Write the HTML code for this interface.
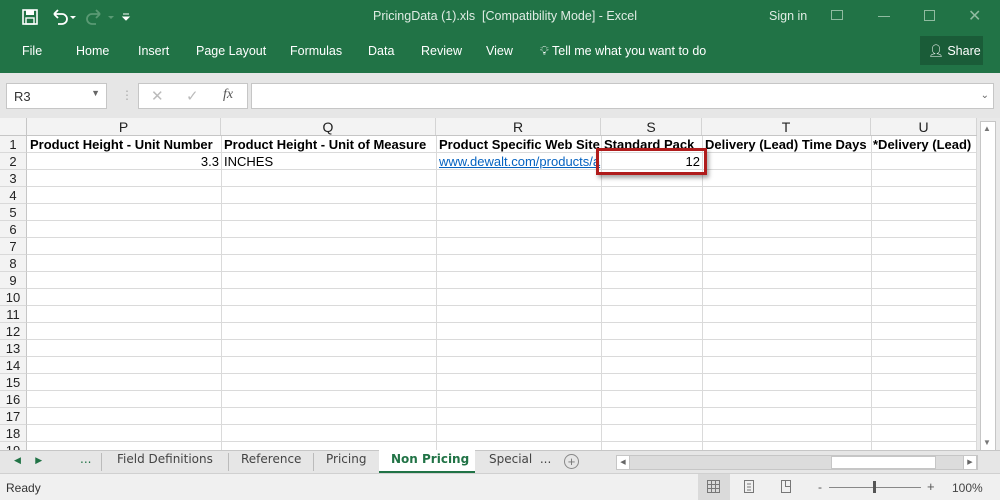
<!DOCTYPE html>
<html><head><style>
*{margin:0;padding:0;box-sizing:border-box}
body{width:1000px;height:500px;overflow:hidden;position:relative;background:#fff;font-family:"Liberation Sans",sans-serif}
.a{position:absolute}
.g{color:#fff;font-size:12.5px}
.col{position:absolute;top:118px;height:18px;text-align:center;font-size:14px;color:#222;border-right:1px solid #d4d4d4;line-height:18px;background:#f3f3f3}
.rn{position:absolute;left:0;width:27px;height:17px;font-size:13px;text-align:center;line-height:17px;background:#f3f3f3;border-right:1px solid #c6c6c6;border-bottom:1px solid #d9d9d9;color:#222}
.vl{position:absolute;top:136px;height:314px;width:1px;background:#dadada}
.hl{position:absolute;left:27px;width:950px;height:1px;background:#dadada}
.c{position:absolute;font-size:13px;line-height:17px;white-space:nowrap;overflow:hidden}
.tab{position:absolute;top:452px;font-size:13px;color:#444;font-family:"DejaVu Sans",sans-serif;font-size:12px}
</style></head><body>
<div class="a" style="left:0;top:0;width:1000px;height:73px;background:#217346"></div>
<svg class="a" style="left:22px;top:8px" width="110" height="20" viewBox="0 0 110 20">
<rect x="1" y="2" width="14" height="14" fill="none" stroke="#fff" stroke-width="1.6"/><rect x="4" y="2" width="8" height="5" fill="#fff"/><rect x="4" y="10" width="8" height="6" fill="none" stroke="#fff" stroke-width="1.4"/>
<path d="M32 6 h8 a5 5 0 0 1 0 10 h-4 M32 6 l4 -4 M32 6 l4 4" stroke="#fff" stroke-width="1.8" fill="none"/>
<path d="M48 8 l3 3 l3 -3z" fill="#fff"/>
<path d="M78 6 h-8 a5 5 0 0 0 0 10 h4 M78 6 l-4 -4 M78 6 l-4 4" stroke="#5a9a74" stroke-width="1.8" fill="none"/>
<path d="M86 8 l3 3 l3 -3z" fill="#5a9a74"/>
<path d="M101 6 h6 M101 9 l3 3 l3 -3z" stroke="#fff" fill="#fff"/>
</svg>
<div class="a g" style="left:373px;top:9px;color:#e0ece4">PricingData (1).xls &nbsp;[Compatibility Mode] - Excel</div>
<div class="a g" style="left:769px;top:9px;color:#e0ece4">Sign in</div>
<div class="a" style="left:831px;top:10px;width:12px;height:10px;border:1px solid #8fbba0"></div>
<div class="a" style="left:878px;top:16px;width:12px;height:1px;background:#8fbba0"></div>
<div class="a" style="left:924px;top:10px;width:11px;height:11px;border:1px solid #8fbba0"></div>
<div class="a" style="left:968px;top:6px;color:#8fbba0;font-size:16px">✕</div>
<div class="a g" style="left:22px;top:44px">File</div>
<div class="a g" style="left:76px;top:44px">Home</div>
<div class="a g" style="left:138px;top:44px">Insert</div>
<div class="a g" style="left:196px;top:44px">Page Layout</div>
<div class="a g" style="left:290px;top:44px">Formulas</div>
<div class="a g" style="left:368px;top:44px">Data</div>
<div class="a g" style="left:421px;top:44px">Review</div>
<div class="a g" style="left:486px;top:44px">View</div>
<div class="a g" style="left:540px;top:44px">💡︎ Tell me what you want to do</div>
<div class="a" style="left:920px;top:36px;width:63px;height:29px;background:#1a5c38"></div>
<div class="a g" style="left:928px;top:44px">👤︎ Share</div>
<div class="a" style="left:0;top:73px;width:1000px;height:45px;background:#e6e6e6"></div>
<div class="a" style="left:6px;top:83px;width:101px;height:26px;background:#fff;border:1px solid #c6c6c6;font-size:13px;padding:5px 7px;color:#333">R3<span style="position:absolute;right:6px;top:4px;font-size:9px;color:#666">▼</span></div>
<div class="a" style="left:121px;top:88px;color:#aaa;font-size:12px">⋮</div>
<div class="a" style="left:138px;top:83px;width:110px;height:26px;background:#fff;border:1px solid #c6c6c6;font-size:15px;color:#bbb"><span class="a" style="left:12px;top:3px">✕</span><span class="a" style="left:47px;top:3px">✓</span><span class="a" style="left:84px;top:3px;color:#555;font-style:italic;font-family:'Liberation Serif';font-size:14px">fx</span></div>
<div class="a" style="left:251px;top:83px;width:743px;height:26px;background:#fff;border:1px solid #c6c6c6"><span class="a" style="right:4px;top:6px;font-size:10px;color:#666">⌄</span></div>
<div class="a" style="left:0;top:118px;width:27px;height:18px;background:#f3f3f3;border-right:1px solid #c6c6c6;border-bottom:1px solid #c6c6c6"></div>
<div class="col" style="left:27px;width:194px">P</div>
<div class="col" style="left:221px;width:215px">Q</div>
<div class="col" style="left:436px;width:165px">R</div>
<div class="col" style="left:601px;width:101px">S</div>
<div class="col" style="left:702px;width:169px">T</div>
<div class="col" style="left:871px;width:106px">U</div>
<div class="a" style="left:27px;top:135px;width:950px;height:1px;background:#c6c6c6"></div>
<div class="a" style="left:977px;top:118px;width:23px;height:332px;background:#e9e9e9"></div>
<div class="a" style="left:980px;top:121px;width:16px;height:330px;background:#fff;border:1px solid #c6c6c6"></div>
<div class="a" style="left:983px;top:124px;font-size:8px;color:#777">▲</div>
<div class="a" style="left:983px;top:438px;font-size:8px;color:#777">▼</div>
<div class="vl" style="left:221px"></div><div class="vl" style="left:436px"></div><div class="vl" style="left:601px"></div><div class="vl" style="left:702px"></div><div class="vl" style="left:871px"></div><div class="vl" style="left:976px"></div>
<div id="rows"></div>
<script>
var h='';for(var i=1;i<=19;i++){var t=136+(i-1)*17;h+='<div class="rn" style="top:'+t+'px">'+i+'</div><div class="hl" style="top:'+(t+16)+'px"></div>';}
document.getElementById('rows').innerHTML=h;
</script>
<div class="c" style="left:30px;top:136px;font-weight:bold;width:190px">Product Height - Unit Number</div>
<div class="c" style="left:224px;top:136px;font-weight:bold">Product Height - Unit of Measure</div>
<div class="c" style="left:439px;top:136px;font-weight:bold;width:162px">Product Specific Web Site</div>
<div class="c" style="left:604px;top:136px;font-weight:bold;width:98px">Standard Pack</div>
<div class="c" style="left:705px;top:136px;font-weight:bold;width:166px">Delivery (Lead) Time Days</div>
<div class="c" style="left:873px;top:136px;font-weight:bold;width:103px">*Delivery (Lead)</div>
<div class="c" style="left:30px;top:153px;width:189px;text-align:right">3.3</div>
<div class="c" style="left:224px;top:153px">INCHES</div>
<div class="c" style="left:439px;top:153px;width:162px;color:#0563c1;text-decoration:underline">www.dewalt.com/products/a</div>
<div class="c" style="left:604px;top:153px;width:96px;text-align:right">12</div>
<div class="a" style="left:596px;top:148px;width:111px;height:27px;border:3px solid #b01c1c;box-shadow:2px 3px 4px rgba(0,0,0,.35)"></div>
<div class="a" style="left:0;top:450px;width:1000px;height:23px;background:#e6e6e6;border-top:1px solid #c6c6c6"></div>
<div class="tab" style="left:14px;color:#217346;font-size:9px;top:456px">◀&nbsp;&nbsp;&nbsp;&nbsp;&nbsp;▶</div>
<div class="tab" style="left:80px;color:#217346">...</div>
<div class="a" style="left:101px;top:453px;width:1px;height:18px;background:#bbb"></div>
<div class="tab" style="left:117px">Field Definitions</div>
<div class="a" style="left:228px;top:453px;width:1px;height:18px;background:#bbb"></div>
<div class="tab" style="left:241px">Reference</div>
<div class="a" style="left:313px;top:453px;width:1px;height:18px;background:#bbb"></div>
<div class="tab" style="left:326px">Pricing</div>
<div class="a" style="left:379px;top:450px;width:96px;height:23px;background:#fff;border-bottom:2px solid #217346"></div>
<div class="tab" style="left:391px;color:#217346;font-weight:bold">Non Pricing</div>
<div class="tab" style="left:489px">Special &nbsp;...</div>
<div class="a" style="left:564px;top:454px;width:15px;height:15px;border:1px solid #888;border-radius:50%;font-size:13px;line-height:13px;text-align:center;color:#777">+</div>
<div class="a" style="left:616px;top:455px;width:362px;height:15px;background:#dcdcdc;border:1px solid #c6c6c6"></div>
<div class="a" style="left:616px;top:455px;width:14px;height:15px;background:#fff;border:1px solid #c6c6c6;font-size:7px;line-height:13px;text-align:center;color:#666">◀</div>
<div class="a" style="left:831px;top:456px;width:105px;height:13px;background:#fff;border:1px solid #c6c6c6"></div>
<div class="a" style="left:963px;top:455px;width:14px;height:15px;background:#fff;border:1px solid #c6c6c6;font-size:7px;line-height:13px;text-align:center;color:#666">▶</div>
<div class="a" style="left:0;top:473px;width:1000px;height:27px;background:#f0f0f0;border-top:1px solid #d0d0d0"></div>
<div class="a" style="left:6px;top:481px;font-size:12px;color:#333">Ready</div>
<div class="a" style="left:698px;top:474px;width:32px;height:26px;background:#dadada"></div>
<svg class="a" style="left:707px;top:480px" width="90" height="14"><path d="M0.5 0.5h12v12h-12zM4.5 0.5v12M8.5 0.5v12M0.5 4.5h12M0.5 8.5h12" stroke="#777" fill="none"/><path d="M37.5 0.5h9v12h-9zM40 4h4M40 7h4M40 10h4" stroke="#777" fill="none"/><path d="M74.5 0.5h9v12h-9zM78.5 0.5v6h5" stroke="#777" fill="none"/></svg>
<div class="a" style="left:818px;top:480px;font-size:12px;color:#555">-</div>
<div class="a" style="left:829px;top:487px;width:92px;height:1px;background:#888"></div>
<div class="a" style="left:873px;top:481px;width:3px;height:12px;background:#555"></div>
<div class="a" style="left:927px;top:479px;font-size:13px;color:#555">+</div>
<div class="a" style="left:952px;top:481px;font-size:12px;color:#444">100%</div>
</body></html>
